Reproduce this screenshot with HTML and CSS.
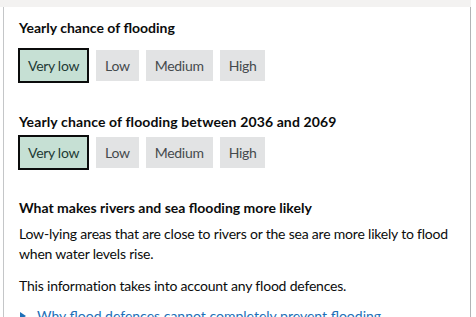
FILE: index.html
```html
<!DOCTYPE html>
<html lang="en">
<head>
    <meta charset="UTF-8">
    <meta name="viewport" content="width=device-width, initial-scale=1.0">
    <link rel="stylesheet" href="styles.css">
</head>
<body>
    <div class="top-band"></div>
    <div class="panel">
        <div class="likelihood first-likelihood">
            <h3 class="likelihood-title">Yearly chance of flooding</h3>
            <ul class="tag-list">
                <li class="tag tag-selected">Very low</li>
                <li class="tag">Low</li>
                <li class="tag">Medium</li>
                <li class="tag">High</li>
            </ul>
        </div>
        <div class="likelihood second-likelihood">
            <h3 class="likelihood-title">Yearly chance of flooding between 2036 and 2069</h3>
            <ul class="tag-list">
                <li class="tag tag-selected">Very low</li>
                <li class="tag">Low</li>
                <li class="tag">Medium</li>
                <li class="tag">High</li>
            </ul>
        </div>
        <div class="info">
            <h4 class="info-title">What makes rivers and sea flooding more likely</h4>
            <p class="info-text">Low-lying areas that are close to rivers or the sea are more likely to flood when water levels rise.</p>
            <p class="info-text">This information takes into account any flood defences.</p>
            <details class="info-details">
                <summary class="info-summary">Why flood defences cannot completely prevent flooding</summary>
            </details>
        </div>
    </div>
</body>
</html>
```

FILE: styles.css
```css
body {
    margin: 0;
    font-family: Lato, "Liberation Sans", sans-serif;
    color: #0b0c0c;
    background: #fff;
}
.top-band {
    width: 471px;
    height: 7px;
    background-color: #f3f2f1;
}
.panel {
    width: 468px;
    margin-left: 3px;
    padding: 11px 0 0 15px;
    box-sizing: border-box;
    border-left: 1px solid #c4c6c8;
    border-right: 1px solid #b1b4b6;
    height: 310px;
    overflow: hidden;
}
.likelihood-title,
.info-title {
    margin: 0;
    font-size: 14px;
    line-height: 20px;
    font-weight: bold;
}
.second-likelihood .likelihood-title {
    letter-spacing: 0.12px;
}
.tag-list {
    list-style: none;
    margin: 0 0 0 -1px;
    padding: 0;
    display: flex;
    align-items: center;
    gap: 7px;
    height: 35px;
}
.first-likelihood .tag-list {
    margin-top: 10px;
}
.second-likelihood {
    margin-top: 29px;
}
.second-likelihood .tag-list {
    margin-top: 3px;
}
.tag {
    height: 31px;
    line-height: 31px;
    padding: 0 9px;
    font-size: 14px;
    letter-spacing: -0.3px;
    background-color: #e2e3e4;
    color: #454a4d;
}
.tag-selected {
    border: 2px solid #0b0c0c;
    padding: 0 8px;
    background-color: #c6e0d4;
    color: #223a35;
}
.info {
    margin-top: 28px;
}
.info-text {
    margin: 6px 0 0;
    font-size: 14px;
    line-height: 20px;
    letter-spacing: -0.2px;
    padding-right: 12px;
}
.info-text + .info-text {
    margin-top: 12px;
}
.info-details {
    margin-top: 10px;
    font-size: 14px;
    line-height: 20px;
}
.info-summary {
    list-style: none;
    display: flex;
    align-items: center;
    gap: 11px;
    color: #1d70b8;
    cursor: pointer;
}
.info-summary::-webkit-details-marker {
    display: none;
}
.info-summary::before {
    content: "";
    width: 0;
    height: 0;
    margin-left: 1px;
    border-top: 4px solid transparent;
    border-bottom: 4px solid transparent;
    border-left: 6px solid #1d70b8;
    flex-shrink: 0;
}
```
